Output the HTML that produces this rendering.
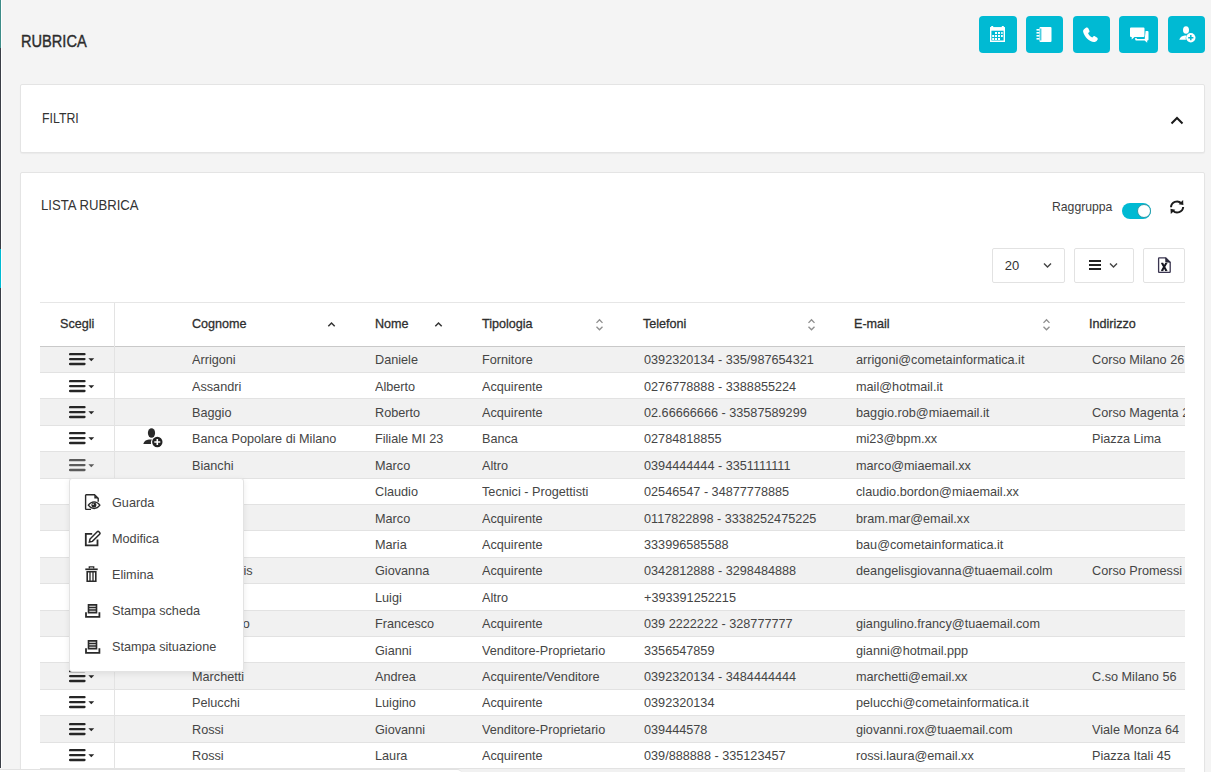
<!DOCTYPE html><html><head><meta charset="utf-8"><style>
*{margin:0;padding:0;box-sizing:border-box}
html,body{width:1211px;height:772px;overflow:hidden;background:#f4f4f4;font-family:"Liberation Sans",sans-serif;color:#3a3a3a}
.a{position:absolute}
.t{position:absolute;white-space:nowrap;line-height:1;transform-origin:0 0}
.btn{position:absolute;top:16px;height:37px;background:#00bad3;border-radius:4px}
.btn svg{position:absolute}
.card{position:absolute;left:20px;width:1185px;background:#fff;border:1px solid #e4e4e4;border-radius:2px;box-shadow:0 1px 1px rgba(0,0,0,0.04)}
.row{position:absolute;left:0;width:1145px;border-bottom:1px solid #e2e2e2}
.odd{background:#f1f1f1}
.c{position:absolute;white-space:nowrap;font-size:13.4px;line-height:1;color:#454545;letter-spacing:0px;transform:scaleX(0.946);transform-origin:0 0}
.h{position:absolute;white-space:nowrap;font-size:13.4px;line-height:1;color:#2e2e2e;-webkit-text-stroke:0.3px #2e2e2e;transform:scaleX(0.94);transform-origin:0 0}
</style></head><body>
<div class="a" style="left:0;top:0;width:1px;height:768px;background:#3b3f47"></div>
<div class="a" style="left:0;top:0;width:1px;height:48px;background:#3d8c88"></div>
<div class="a" style="left:1px;top:0;width:1px;height:768px;background:#fff"></div>
<div class="a" style="left:0;top:249px;width:1px;height:39px;background:#00bad3"></div>
<div class="t" style="left:20.80px;top:33.90px;font-size:16.7px;color:#2c2c2c;-webkit-text-stroke:0.4px #2c2c2c;transform:scaleX(0.8747);">RUBRICA</div>
<div class="btn" style="left:979px;width:38px"><svg width="15" height="16" viewBox="0 0 15 16" style="left:11px;top:10.4px"><path d="M0.7 2h13.6v13.3h-13.6z" fill="none" stroke="#fff" stroke-width="1.4"/><rect x="0" y="1.3" width="15" height="3.4" fill="#fff"/><rect x="1.2" y="0" width="2" height="2" fill="#fff"/><rect x="11.8" y="0" width="2" height="2" fill="#fff"/><g fill="#fff"><rect x="5" y="6" width="2" height="2"/><rect x="8" y="6" width="2" height="2"/><rect x="11" y="6" width="1.8" height="2" opacity="0.8"/><rect x="2.2" y="9" width="2" height="2"/><rect x="5" y="9" width="2" height="2"/><rect x="8" y="9" width="2" height="2"/><rect x="11" y="9" width="1.8" height="2"/><rect x="2.2" y="12" width="2" height="2"/><rect x="5" y="12" width="2" height="2"/><rect x="8" y="12" width="2" height="2"/></g></svg></div>
<div class="btn" style="left:1026px;width:37px"><svg width="16" height="15" viewBox="0 0 16 15" style="left:10px;top:11px"><rect x="3.5" y="0" width="12" height="15" rx="1" fill="#fff"/><g fill="#fff"><rect x="0.5" y="2" width="3" height="1.6"/><rect x="0.5" y="5" width="3" height="1.6"/><rect x="0.5" y="8" width="3" height="1.6"/><rect x="0.5" y="11" width="3" height="1.6"/></g><rect x="4.3" y="1.5" width="1" height="12" fill="#00bad3"/></svg></div>
<div class="btn" style="left:1073px;width:37px"><svg width="16" height="16" viewBox="0 0 16 16" style="left:10px;top:11px"><path d="M3.2 0.6c0.9-0.5 1.8 0 2.2 0.9l1 2.2c0.3 0.7 0.1 1.4-0.5 1.8l-0.9 0.6c0.8 1.9 2.4 3.6 4.3 4.5l0.7-0.9c0.4-0.6 1.2-0.8 1.8-0.4l2.1 1.2c0.8 0.5 1.1 1.4 0.6 2.2l-0.7 1.1c-0.6 0.9-1.7 1.4-2.8 1.1C6.2 14.6 1.4 9.8 0.2 4.9c-0.3-1.1 0.2-2.2 1.1-2.8z" fill="#fff"/></svg></div>
<div class="btn" style="left:1119px;width:39px"><svg width="19" height="16" viewBox="0 0 19 16" style="left:10.5px;top:10.5px"><path d="M1 0.5h12.5a1 1 0 0 1 1 1v7.5a1 1 0 0 1-1 1h-9l-2.8 2.5v-2.5h-0.7a1 1 0 0 1-1-1v-7.5a1 1 0 0 1 1-1z" fill="#fff"/><path d="M15.6 4h1.9a1 1 0 0 1 1 1v7.6a1 1 0 0 1-1 1h-0.3v2.2l-2.6-2.2h-8.4a1 1 0 0 1-1-1v-1.7h1.5v1.1h8z" fill="#fff"/></svg></div>
<div class="btn" style="left:1168px;width:37px"><svg width="17" height="17" viewBox="0 0 17 17" style="left:10.5px;top:10px"><ellipse cx="7" cy="4" rx="3" ry="3.8" fill="#fff"/><path d="M0.3 13.8c0.5-2.6 2.8-4.2 5.5-4.4h1.8c-0.8 1.2-1.1 2.8-0.6 4.4z" fill="#fff"/><circle cx="11.8" cy="11.7" r="4.7" fill="#fff"/><path d="M11.8 9.1v5.2M9.2 11.7h5.2" stroke="#00bad3" stroke-width="1.5"/></svg></div>
<div class="card" style="top:84px;height:69px"></div>
<div class="t" style="left:41.50px;top:109.90px;font-size:15.5px;color:#333;transform:scaleX(0.7962);">FILTRI</div>
<svg class="a" style="left:1170px;top:116px" width="14" height="9" viewBox="0 0 14 9"><path d="M1.5 7.5L7 2l5.5 5.5" fill="none" stroke="#1a1a1a" stroke-width="2"/></svg>
<div class="card" style="top:172px;height:620px"></div>
<div class="t" style="left:41.40px;top:196.90px;font-size:15.5px;color:#333;transform:scaleX(0.8477);">LISTA RUBRICA</div>
<div class="t" style="left:1051.60px;top:199.50px;font-size:13px;color:#3d3d3d;transform:scaleX(0.9389);">Raggruppa</div>
<div class="a" style="left:1122.4px;top:202.7px;width:29px;height:16px;border-radius:8px;background:#00bad3"></div>
<div class="a" style="left:1136.6px;top:203.6px;width:14px;height:14px;border-radius:7px;background:#fff;border:1px solid #2a9aa8"></div>
<svg class="a" style="left:1169px;top:199px" width="16" height="16" viewBox="0 0 16 16"><path d="M2 8.3A6 6 0 0 1 12.3 4.3" fill="none" stroke="#1c1c1c" stroke-width="2"/><path d="M14.1 0.9L14.4 6.1L9.6 5.2z" fill="#1c1c1c"/><path d="M14.2 8A6 6 0 0 1 3.9 11.6" fill="none" stroke="#1c1c1c" stroke-width="2"/><path d="M1.8 14.9L1.5 9.8L6.3 10.8z" fill="#1c1c1c"/></svg>
<div class="a" style="left:992px;top:248px;width:73px;height:35px;border:1px solid #e2e2e2;border-radius:2px;background:#fff"></div>
<div class="t" style="left:1004.80px;top:259.00px;font-size:13px;color:#333;">20</div>
<svg class="a" style="left:1043px;top:262px" width="9" height="7" viewBox="0 0 9 7"><path d="M1 1.5l3.5 3.5 3.5-3.5" fill="none" stroke="#444" stroke-width="1.4"/></svg>
<div class="a" style="left:1074px;top:248px;width:60px;height:35px;border:1px solid #e2e2e2;border-radius:2px;background:#fff"></div>
<svg class="a" style="left:1089px;top:259px" width="12" height="12" viewBox="0 0 12 12"><path d="M0 2h12M0 6h12M0 10h12" stroke="#222" stroke-width="2"/></svg>
<svg class="a" style="left:1109px;top:262px" width="9" height="7" viewBox="0 0 9 7"><path d="M1 1.5l3.5 3.5 3.5-3.5" fill="none" stroke="#444" stroke-width="1.4"/></svg>
<div class="a" style="left:1143px;top:248px;width:42px;height:35px;border:1px solid #e2e2e2;border-radius:2px;background:#fff"></div>
<svg class="a" style="left:1157px;top:257px" width="14" height="16" viewBox="0 0 14 16"><path d="M1.6 0.8h7.2l4.4 4.4v9.6a0.6 0.6 0 0 1-0.6 0.6h-10.4a0.6 0.6 0 0 1-0.6-0.6v-13.4a0.6 0.6 0 0 1 0.6-0.6z" fill="none" stroke="#3a3550" stroke-width="1.3"/><path d="M8.6 0.8l0.2 4.2l4.4 0.2" fill="#2a2a3a" stroke="#2a2a3a" stroke-width="0.8"/><path d="M5.1 6.3l4.1 7.3M9.2 6.3l-4.1 7.3" stroke="#151520" stroke-width="2"/><path d="M4.1 6.3h2.2M8.1 6.3h2.2M4.1 13.6h2.2M8.1 13.6h2.2" stroke="#151520" stroke-width="1"/></svg>
<div class="a" style="left:40px;top:302px;width:1145px;height:470px;overflow:hidden">
<div class="a" style="left:0;top:0;width:1145px;height:1px;background:#e6e6e6"></div>
<div class="h" style="left:19.90px;top:15.11px;">Scegli</div>
<div class="h" style="left:152.00px;top:15.11px;">Cognome</div>
<div class="h" style="left:335.00px;top:15.11px;">Nome</div>
<div class="h" style="left:441.90px;top:15.11px;">Tipologia</div>
<div class="h" style="left:603.00px;top:15.11px;">Telefoni</div>
<div class="h" style="left:814.10px;top:15.11px;">E-mail</div>
<div class="h" style="left:1049.10px;top:15.11px;">Indirizzo</div>
<svg class="a" style="left:287.30px;top:18px" width="9" height="9" viewBox="0 0 9 9"><path d="M1.3 6.3L4.5 3 7.7 6.3" fill="none" stroke="#333" stroke-width="1.5"/></svg>
<svg class="a" style="left:393.70px;top:18px" width="9" height="9" viewBox="0 0 9 9"><path d="M1.3 6.3L4.5 3 7.7 6.3" fill="none" stroke="#333" stroke-width="1.5"/></svg>
<svg class="a" style="left:555.10px;top:16px" width="9" height="14" viewBox="0 0 9 14"><path d="M1.5 4.9L4.5 1.8 7.5 4.9M1.5 8.7L4.5 11.8 7.5 8.7" fill="none" stroke="#8f8f8f" stroke-width="1.3"/></svg>
<svg class="a" style="left:766.70px;top:16px" width="9" height="14" viewBox="0 0 9 14"><path d="M1.5 4.9L4.5 1.8 7.5 4.9M1.5 8.7L4.5 11.8 7.5 8.7" fill="none" stroke="#8f8f8f" stroke-width="1.3"/></svg>
<svg class="a" style="left:1002.00px;top:16px" width="9" height="14" viewBox="0 0 9 14"><path d="M1.5 4.9L4.5 1.8 7.5 4.9M1.5 8.7L4.5 11.8 7.5 8.7" fill="none" stroke="#8f8f8f" stroke-width="1.3"/></svg>
<div class="row odd" style="top:44.60px;height:26.40px"></div>
<div class="row" style="top:71.00px;height:26.40px"></div>
<div class="row odd" style="top:97.40px;height:26.40px"></div>
<div class="row" style="top:123.80px;height:26.40px"></div>
<div class="row odd" style="top:150.20px;height:26.40px"></div>
<div class="row" style="top:176.60px;height:26.40px"></div>
<div class="row odd" style="top:203.00px;height:26.40px"></div>
<div class="row" style="top:229.40px;height:26.40px"></div>
<div class="row odd" style="top:255.80px;height:26.40px"></div>
<div class="row" style="top:282.20px;height:26.40px"></div>
<div class="row odd" style="top:308.60px;height:26.40px"></div>
<div class="row" style="top:335.00px;height:26.40px"></div>
<div class="row odd" style="top:361.40px;height:26.40px"></div>
<div class="row" style="top:387.80px;height:26.40px"></div>
<div class="row odd" style="top:414.20px;height:26.40px"></div>
<div class="row" style="top:440.60px;height:26.40px"></div>
<div class="row odd" style="top:467.00px;height:26.40px"></div>
<svg class="a" style="left:29px;top:51.10px" width="26" height="13" viewBox="0 0 26 13"><path d="M1.1 1.2h14.4M1.1 6.1h14.4M1.1 11h14.4" stroke="#262626" stroke-width="2.3" stroke-linecap="round"/><path d="M19.4 5.3h5.8l-2.9 3z" fill="#262626"/></svg>
<div class="c" style="left:152.00px;top:51.11px;">Arrigoni</div>
<div class="c" style="left:335.00px;top:51.11px;">Daniele</div>
<div class="c" style="left:441.90px;top:51.11px;">Fornitore</div>
<div class="c" style="left:604.30px;top:51.11px;">0392320134 - 335/987654321</div>
<div class="c" style="left:816.10px;top:51.11px;">arrigoni@cometainformatica.it</div>
<div class="c" style="left:1052.00px;top:51.11px;">Corso Milano 26</div>
<svg class="a" style="left:29px;top:77.50px" width="26" height="13" viewBox="0 0 26 13"><path d="M1.1 1.2h14.4M1.1 6.1h14.4M1.1 11h14.4" stroke="#262626" stroke-width="2.3" stroke-linecap="round"/><path d="M19.4 5.3h5.8l-2.9 3z" fill="#262626"/></svg>
<div class="c" style="left:152.00px;top:77.51px;">Assandri</div>
<div class="c" style="left:335.00px;top:77.51px;">Alberto</div>
<div class="c" style="left:441.90px;top:77.51px;">Acquirente</div>
<div class="c" style="left:604.30px;top:77.51px;">0276778888 - 3388855224</div>
<div class="c" style="left:816.10px;top:77.51px;">mail@hotmail.it</div>
<svg class="a" style="left:29px;top:103.90px" width="26" height="13" viewBox="0 0 26 13"><path d="M1.1 1.2h14.4M1.1 6.1h14.4M1.1 11h14.4" stroke="#262626" stroke-width="2.3" stroke-linecap="round"/><path d="M19.4 5.3h5.8l-2.9 3z" fill="#262626"/></svg>
<div class="c" style="left:152.00px;top:103.91px;">Baggio</div>
<div class="c" style="left:335.00px;top:103.91px;">Roberto</div>
<div class="c" style="left:441.90px;top:103.91px;">Acquirente</div>
<div class="c" style="left:604.30px;top:103.91px;">02.66666666 - 33587589299</div>
<div class="c" style="left:816.10px;top:103.91px;">baggio.rob@miaemail.it</div>
<div class="c" style="left:1052.00px;top:103.91px;">Corso Magenta 2</div>
<svg class="a" style="left:29px;top:130.30px" width="26" height="13" viewBox="0 0 26 13"><path d="M1.1 1.2h14.4M1.1 6.1h14.4M1.1 11h14.4" stroke="#262626" stroke-width="2.3" stroke-linecap="round"/><path d="M19.4 5.3h5.8l-2.9 3z" fill="#262626"/></svg>
<div class="c" style="left:152.00px;top:130.31px;">Banca Popolare di Milano</div>
<div class="c" style="left:335.00px;top:130.31px;">Filiale MI 23</div>
<div class="c" style="left:441.90px;top:130.31px;">Banca</div>
<div class="c" style="left:604.30px;top:130.31px;">02784818855</div>
<div class="c" style="left:816.10px;top:130.31px;">mi23@bpm.xx</div>
<div class="c" style="left:1052.00px;top:130.31px;">Piazza Lima</div>
<svg class="a" style="left:102.5px;top:126.30px" width="20" height="20" viewBox="0 0 20 20"><ellipse cx="8.5" cy="5" rx="3.6" ry="4.8" fill="#2a2a2a"/><path d="M0.3 16c0.6-2.6 2.8-4.3 5.6-4.5h3c-1 1.2-1.2 3-0.8 4.5z" fill="#2a2a2a"/><circle cx="14.3" cy="14" r="5.2" fill="#222"/><path d="M14.3 11v6M11.3 14h6" stroke="#fff" stroke-width="1.6"/></svg>
<svg class="a" style="left:29px;top:156.70px" width="26" height="13" viewBox="0 0 26 13"><path d="M1.1 1.2h14.4M1.1 6.1h14.4M1.1 11h14.4" stroke="#5a5a5a" stroke-width="2.3" stroke-linecap="round"/><path d="M19.4 5.3h5.8l-2.9 3z" fill="#5a5a5a"/></svg>
<div class="c" style="left:152.00px;top:156.71px;">Bianchi</div>
<div class="c" style="left:335.00px;top:156.71px;">Marco</div>
<div class="c" style="left:441.90px;top:156.71px;">Altro</div>
<div class="c" style="left:604.30px;top:156.71px;">0394444444 - 3351111111</div>
<div class="c" style="left:816.10px;top:156.71px;">marco@miaemail.xx</div>
<svg class="a" style="left:29px;top:183.10px" width="26" height="13" viewBox="0 0 26 13"><path d="M1.1 1.2h14.4M1.1 6.1h14.4M1.1 11h14.4" stroke="#262626" stroke-width="2.3" stroke-linecap="round"/><path d="M19.4 5.3h5.8l-2.9 3z" fill="#262626"/></svg>
<div class="c" style="left:335.00px;top:183.11px;">Claudio</div>
<div class="c" style="left:441.90px;top:183.11px;">Tecnici - Progettisti</div>
<div class="c" style="left:604.30px;top:183.11px;">02546547 - 34877778885</div>
<div class="c" style="left:816.10px;top:183.11px;">claudio.bordon@miaemail.xx</div>
<svg class="a" style="left:29px;top:209.50px" width="26" height="13" viewBox="0 0 26 13"><path d="M1.1 1.2h14.4M1.1 6.1h14.4M1.1 11h14.4" stroke="#262626" stroke-width="2.3" stroke-linecap="round"/><path d="M19.4 5.3h5.8l-2.9 3z" fill="#262626"/></svg>
<div class="c" style="left:335.00px;top:209.51px;">Marco</div>
<div class="c" style="left:441.90px;top:209.51px;">Acquirente</div>
<div class="c" style="left:604.30px;top:209.51px;">0117822898 - 3338252475225</div>
<div class="c" style="left:816.10px;top:209.51px;">bram.mar@email.xx</div>
<svg class="a" style="left:29px;top:235.90px" width="26" height="13" viewBox="0 0 26 13"><path d="M1.1 1.2h14.4M1.1 6.1h14.4M1.1 11h14.4" stroke="#262626" stroke-width="2.3" stroke-linecap="round"/><path d="M19.4 5.3h5.8l-2.9 3z" fill="#262626"/></svg>
<div class="c" style="left:335.00px;top:235.91px;">Maria</div>
<div class="c" style="left:441.90px;top:235.91px;">Acquirente</div>
<div class="c" style="left:604.30px;top:235.91px;">333996585588</div>
<div class="c" style="left:816.10px;top:235.91px;">bau@cometainformatica.it</div>
<svg class="a" style="left:29px;top:262.30px" width="26" height="13" viewBox="0 0 26 13"><path d="M1.1 1.2h14.4M1.1 6.1h14.4M1.1 11h14.4" stroke="#262626" stroke-width="2.3" stroke-linecap="round"/><path d="M19.4 5.3h5.8l-2.9 3z" fill="#262626"/></svg>
<div class="c" style="left:152.00px;top:262.31px;">De Angelis</div>
<div class="c" style="left:335.00px;top:262.31px;">Giovanna</div>
<div class="c" style="left:441.90px;top:262.31px;">Acquirente</div>
<div class="c" style="left:604.30px;top:262.31px;">0342812888 - 3298484888</div>
<div class="c" style="left:816.10px;top:262.31px;">deangelisgiovanna@tuaemail.colm</div>
<div class="c" style="left:1052.00px;top:262.31px;">Corso Promessi</div>
<svg class="a" style="left:29px;top:288.70px" width="26" height="13" viewBox="0 0 26 13"><path d="M1.1 1.2h14.4M1.1 6.1h14.4M1.1 11h14.4" stroke="#262626" stroke-width="2.3" stroke-linecap="round"/><path d="M19.4 5.3h5.8l-2.9 3z" fill="#262626"/></svg>
<div class="c" style="left:335.00px;top:288.71px;">Luigi</div>
<div class="c" style="left:441.90px;top:288.71px;">Altro</div>
<div class="c" style="left:604.30px;top:288.71px;">+393391252215</div>
<svg class="a" style="left:29px;top:315.10px" width="26" height="13" viewBox="0 0 26 13"><path d="M1.1 1.2h14.4M1.1 6.1h14.4M1.1 11h14.4" stroke="#262626" stroke-width="2.3" stroke-linecap="round"/><path d="M19.4 5.3h5.8l-2.9 3z" fill="#262626"/></svg>
<div class="c" style="left:152.00px;top:315.11px;">Gianpaolo</div>
<div class="c" style="left:335.00px;top:315.11px;">Francesco</div>
<div class="c" style="left:441.90px;top:315.11px;">Acquirente</div>
<div class="c" style="left:604.30px;top:315.11px;">039 2222222 - 328777777</div>
<div class="c" style="left:816.10px;top:315.11px;">giangulino.francy@tuaemail.com</div>
<svg class="a" style="left:29px;top:341.50px" width="26" height="13" viewBox="0 0 26 13"><path d="M1.1 1.2h14.4M1.1 6.1h14.4M1.1 11h14.4" stroke="#262626" stroke-width="2.3" stroke-linecap="round"/><path d="M19.4 5.3h5.8l-2.9 3z" fill="#262626"/></svg>
<div class="c" style="left:335.00px;top:341.51px;">Gianni</div>
<div class="c" style="left:441.90px;top:341.51px;">Venditore-Proprietario</div>
<div class="c" style="left:604.30px;top:341.51px;">3356547859</div>
<div class="c" style="left:816.10px;top:341.51px;">gianni@hotmail.ppp</div>
<svg class="a" style="left:29px;top:367.90px" width="26" height="13" viewBox="0 0 26 13"><path d="M1.1 1.2h14.4M1.1 6.1h14.4M1.1 11h14.4" stroke="#262626" stroke-width="2.3" stroke-linecap="round"/><path d="M19.4 5.3h5.8l-2.9 3z" fill="#262626"/></svg>
<div class="c" style="left:152.00px;top:367.91px;">Marchetti</div>
<div class="c" style="left:335.00px;top:367.91px;">Andrea</div>
<div class="c" style="left:441.90px;top:367.91px;">Acquirente/Venditore</div>
<div class="c" style="left:604.30px;top:367.91px;">0392320134 - 3484444444</div>
<div class="c" style="left:816.10px;top:367.91px;">marchetti@email.xx</div>
<div class="c" style="left:1052.00px;top:367.91px;">C.so Milano 56</div>
<svg class="a" style="left:29px;top:394.30px" width="26" height="13" viewBox="0 0 26 13"><path d="M1.1 1.2h14.4M1.1 6.1h14.4M1.1 11h14.4" stroke="#262626" stroke-width="2.3" stroke-linecap="round"/><path d="M19.4 5.3h5.8l-2.9 3z" fill="#262626"/></svg>
<div class="c" style="left:152.00px;top:394.31px;">Pelucchi</div>
<div class="c" style="left:335.00px;top:394.31px;">Luigino</div>
<div class="c" style="left:441.90px;top:394.31px;">Acquirente</div>
<div class="c" style="left:604.30px;top:394.31px;">0392320134</div>
<div class="c" style="left:816.10px;top:394.31px;">pelucchi@cometainformatica.it</div>
<svg class="a" style="left:29px;top:420.70px" width="26" height="13" viewBox="0 0 26 13"><path d="M1.1 1.2h14.4M1.1 6.1h14.4M1.1 11h14.4" stroke="#262626" stroke-width="2.3" stroke-linecap="round"/><path d="M19.4 5.3h5.8l-2.9 3z" fill="#262626"/></svg>
<div class="c" style="left:152.00px;top:420.71px;">Rossi</div>
<div class="c" style="left:335.00px;top:420.71px;">Giovanni</div>
<div class="c" style="left:441.90px;top:420.71px;">Venditore-Proprietario</div>
<div class="c" style="left:604.30px;top:420.71px;">039444578</div>
<div class="c" style="left:816.10px;top:420.71px;">giovanni.rox@tuaemail.com</div>
<div class="c" style="left:1052.00px;top:420.71px;">Viale Monza 64</div>
<svg class="a" style="left:29px;top:447.10px" width="26" height="13" viewBox="0 0 26 13"><path d="M1.1 1.2h14.4M1.1 6.1h14.4M1.1 11h14.4" stroke="#262626" stroke-width="2.3" stroke-linecap="round"/><path d="M19.4 5.3h5.8l-2.9 3z" fill="#262626"/></svg>
<div class="c" style="left:152.00px;top:447.11px;">Rossi</div>
<div class="c" style="left:335.00px;top:447.11px;">Laura</div>
<div class="c" style="left:441.90px;top:447.11px;">Acquirente</div>
<div class="c" style="left:604.30px;top:447.11px;">039/888888 - 335123457</div>
<div class="c" style="left:816.10px;top:447.11px;">rossi.laura@email.xx</div>
<div class="c" style="left:1052.00px;top:447.11px;">Piazza Itali 45</div>
<div class="a" style="left:0;top:43.55px;width:1145px;height:1.5px;background:#c9c9c9"></div>
<div class="a" style="left:74px;top:1px;width:1px;height:470px;background:#e3e3e3"></div>
</div>
<div class="a" style="left:69px;top:478px;width:175px;height:194px;background:#fff;border:1px solid #e3e3e3;border-radius:3px;box-shadow:0 2px 6px rgba(0,0,0,0.08)"></div>
<div class="t" style="left:111.50px;top:495.70px;font-size:13.4px;color:#454545;letter-spacing:0px;transform:scaleX(0.946);">Guarda</div>
<div class="t" style="left:111.50px;top:531.70px;font-size:13.4px;color:#454545;letter-spacing:0px;transform:scaleX(0.946);">Modifica</div>
<div class="t" style="left:111.50px;top:567.70px;font-size:13.4px;color:#454545;letter-spacing:0px;transform:scaleX(0.946);">Elimina</div>
<div class="t" style="left:111.50px;top:603.70px;font-size:13.4px;color:#454545;letter-spacing:0px;transform:scaleX(0.946);">Stampa scheda</div>
<div class="t" style="left:111.50px;top:639.70px;font-size:13.4px;color:#454545;letter-spacing:0px;transform:scaleX(0.946);">Stampa situazione</div>
<svg class="a" style="left:84px;top:494px" width="18" height="17" viewBox="0 0 18 17"><path d="M7 15.4H2.2a0.6 0.6 0 0 1-0.6-0.6V1.3a0.6 0.6 0 0 1 0.6-0.6h8.3l3.7 3.7v3.4" fill="none" stroke="#2a2a2a" stroke-width="1.4"/><path d="M10.3 0.9v3.6h3.7z" fill="#2a2a2a"/><path d="M4.3 11.2c1.6-2.2 3.5-3.3 5.8-3.3s4.2 1.1 5.8 3.3c-1.6 2.2-3.5 3.3-5.8 3.3s-4.2-1.100-5.800-3.300z" fill="#fff" stroke="#2a2a2a" stroke-width="1.3"/><circle cx="9.900" cy="11.100" r="2.500" fill="#2a2a2a"/><circle cx="9.100" cy="10.300" r="0.800" fill="#fff"/></svg>
<svg class="a" style="left:84px;top:530px" width="17" height="17" viewBox="0 0 17 17"><path d="M8.200 3.800H1.800v11.600h11.700V9.500" fill="none" stroke="#2a2a2a" stroke-width="1.800"/><path d="M5.400 12l0.600-3 7.200-7.200c0.500-0.500 1.200-0.500 1.700 0l0.700 0.700c0.500 0.500 0.500 1.200 0 1.700l-7.200 7.200z" fill="none" stroke="#2a2a2a" stroke-width="1.500"/></svg>
<svg class="a" style="left:85px;top:566px" width="13" height="16" viewBox="0 0 13 16"><path d="M0.300 3.300h12.400" stroke="#2a2a2a" stroke-width="1.700"/><path d="M4.300 2.600v-1.700h4.400v1.700" fill="none" stroke="#2a2a2a" stroke-width="1.300"/><path d="M2.200 5.700h8.600v9.500h-8.600z" fill="none" stroke="#2a2a2a" stroke-width="1.600"/><path d="M5 6v9M8 6v9" stroke="#2a2a2a" stroke-width="1.300"/></svg>
<svg class="a" style="left:84.5px;top:603.6px" width="16" height="14" viewBox="0 0 16 14"><rect x="2.700" y="0" width="9.600" height="9.500" fill="#2a2a2a"/><path d="M4.300 2.300h6.400M4.300 4.800h6.400M4.300 7.200h6.400" stroke="#eee" stroke-width="1.100"/><path d="M1 8.300v4.500h13.400v-4.500" fill="none" stroke="#2a2a2a" stroke-width="1.800"/></svg>
<svg class="a" style="left:84.5px;top:639.6px" width="16" height="14" viewBox="0 0 16 14"><rect x="2.700" y="0" width="9.600" height="9.500" fill="#2a2a2a"/><path d="M4.300 2.300h6.400M4.300 4.800h6.400M4.300 7.200h6.400" stroke="#eee" stroke-width="1.100"/><path d="M1 8.300v4.500h13.400v-4.500" fill="none" stroke="#2a2a2a" stroke-width="1.800"/></svg>
<div class="a" style="left:0;top:768.6px;width:462px;height:6px;background:#fff;border-top:1px solid #e2e2e2;border-top-right-radius:5px"></div>
</body></html>
